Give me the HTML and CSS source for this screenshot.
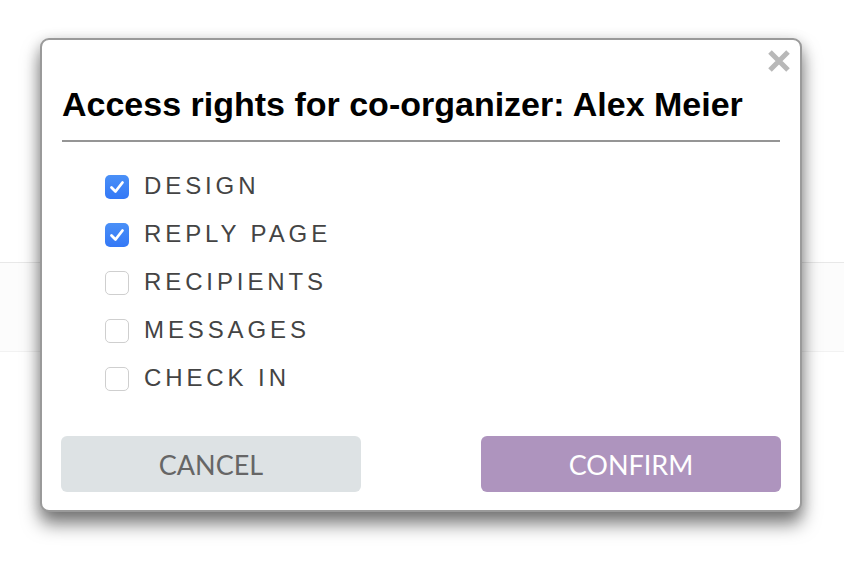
FILE: index.html
```html
<!DOCTYPE html>
<html>
<head>
<meta charset="utf-8">
<link rel="stylesheet" href="styles.css">
</head>
<body>
<div class="page">
  <div class="page-top"></div>
  <div class="page-band"></div>
  <div class="page-rest"></div>
</div>
<div class="modal">
  <button class="close" aria-label="Close">
    <svg width="24" height="24" viewBox="0 0 24 24"><path d="M3 3 L21 21 M21 3 L3 21" stroke="#b8b8b8" stroke-width="5" stroke-linecap="butt"/></svg>
  </button>
  <h1 class="title">Access rights for co-organizer: Alex Meier</h1>
  <ul class="rights">
    <li class="right"><span class="box checked"><svg viewBox="0 0 24 24" width="24" height="24"><path d="M6.5 12.5 L10.5 16.5 L17.5 7.5" fill="none" stroke="#fff" stroke-width="2.8" stroke-linecap="round" stroke-linejoin="round"/></svg></span><span class="label">DESIGN</span></li>
    <li class="right"><span class="box checked"><svg viewBox="0 0 24 24" width="24" height="24"><path d="M6.5 12.5 L10.5 16.5 L17.5 7.5" fill="none" stroke="#fff" stroke-width="2.8" stroke-linecap="round" stroke-linejoin="round"/></svg></span><span class="label">REPLY PAGE</span></li>
    <li class="right"><span class="box"></span><span class="label">RECIPIENTS</span></li>
    <li class="right"><span class="box"></span><span class="label">MESSAGES</span></li>
    <li class="right"><span class="box"></span><span class="label">CHECK IN</span></li>
  </ul>
  <div class="actions">
    <button class="btn cancel">CANCEL</button>
    <button class="btn confirm">CONFIRM</button>
  </div>
</div>
</body>
</html>
```

FILE: styles.css
```css
html, body {
  margin: 0;
  padding: 0;
  background: #ffffff;
}
body {
  width: 844px;
  height: 562px;
  overflow: hidden;
  position: relative;
  font-family: "Liberation Sans", Arial, sans-serif;
}
.page-top {
  height: 262px;
  border-bottom: 1px solid #e8e8e8;
}
.page-band {
  height: 88px;
  background: #fcfcfc;
  border-bottom: 1px solid #f2f2f2;
}
.page-rest {
  height: 210px;
  background: #ffffff;
}
.modal {
  position: absolute;
  left: 40px;
  top: 38px;
  width: 762px;
  height: 474px;
  box-sizing: border-box;
  background: #fff;
  border: 2px solid #9a9a9a;
  border-radius: 9px;
  box-shadow: 0 12px 18px rgba(0, 0, 0, 0.5), 0 2px 14px rgba(0, 0, 0, 0.15);
  padding: 0 20px;
  display: flex;
  flex-direction: column;
}
.close {
  position: absolute;
  top: 9px;
  right: 9px;
  width: 24px;
  height: 24px;
  padding: 0;
  border: 0;
  background: none;
  display: block;
}
.close svg { display: block; }
.title {
  margin: 45px 0 0;
  padding-bottom: 16px;
  border-bottom: 2px solid #959595;
  font-size: 34px;
  line-height: 39px;
  font-weight: bold;
  color: #000;
  white-space: nowrap;
}
.rights {
  list-style: none;
  margin: 20px 0 0;
  padding: 0 0 0 43px;
}
.right {
  height: 48px;
  display: flex;
  align-items: center;
}
.box {
  width: 22px;
  height: 22px;
  border: 1px solid #cfcfcf;
  border-radius: 5px;
  background: #fff;
  box-sizing: content-box;
  margin-right: 15px;
  position: relative;
  top: 1px;
  flex: none;
}
.box.checked {
  width: 24px;
  height: 24px;
  border: 0;
  background: linear-gradient(#4a90f7, #3478f6);
}
.box svg { display: block; }
.label {
  font-size: 24px;
  letter-spacing: 3.9px;
  color: #444;
}
.actions {
  margin-top: 34px;
  display: flex;
  justify-content: space-between;
}
.btn {
  width: 300px;
  height: 56px;
  border: 0;
  border-radius: 6px;
  font-family: Lato, "Open Sans", sans-serif;
  font-size: 27px;
  padding: 0;
}
.cancel {
  background: #dde2e4;
  color: #666;
  margin-left: -1px;
}
.confirm {
  background: #ae94be;
  color: #fff;
  margin-right: -1px;
}
```
